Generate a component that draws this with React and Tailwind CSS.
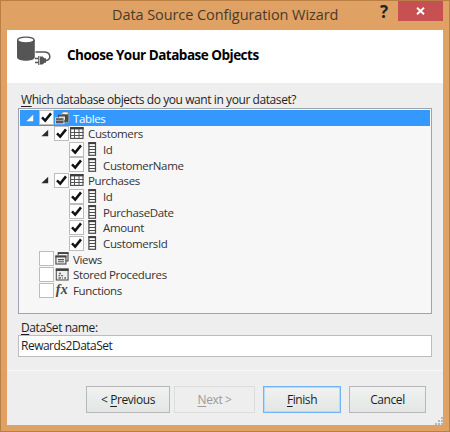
import React from "react";

const Arrow = ({ light }) => (
  <svg width="9" height="8" viewBox="0 0 9 8" className="shrink-0">
    <path d="M7.2 0.8V7.2H0.4Z" fill={light ? "#fff" : "#2b2b2b"} />
  </svg>
);

const Check = ({ checked }) => (
  <span className="flex h-[15px] w-[15px] shrink-0 items-center justify-center border border-[#bdbdbd] bg-white">
    {checked && (
      <svg width="11" height="11" viewBox="0 0 11 11">
        <path d="M1 5.4L4.2 8.6L10 1.4" fill="none" stroke="#111" strokeWidth="2.5" />
      </svg>
    )}
  </span>
);

const icons = {
  tables: (
    <svg width="15" height="14" viewBox="0 0 15 14">
      <path d="M6.5 2V10.5C7 12.3 13 12.3 13.8 10.5V2Z" fill="#4c4c4c" stroke="#d8d8d8" strokeWidth=".5" />
      <ellipse cx="10.2" cy="2.2" rx="3.6" ry="1.6" fill="#eee" stroke="#666" strokeWidth=".8" />
      <rect x="3.5" y="4.3" width="7" height="5" fill="#e8e8e8" stroke="#444" />
      <path d="M4 5H10" stroke="#444" />
      <rect x=".5" y="6.8" width="8.4" height="6" fill="#555" stroke="#e5e5e5" strokeWidth=".8" />
      <path d="M1 9.4H8.5" stroke="#bbb" strokeWidth=".8" />
    </svg>
  ),
  table: (
    <svg width="14" height="12" viewBox="0 0 14 12">
      <rect x=".6" y=".6" width="12.4" height="10.8" fill="#fff" stroke="#4a4a4a" strokeWidth="1.1" />
      <path d="M0 1.3H13.6" stroke="#3c3c3c" strokeWidth="2.2" />
      <path d="M0 5.5H13.6M0 8.5H13.6M4.5 2V12M9 2V12" stroke="#555" strokeWidth="1" />
    </svg>
  ),
  column: (
    <svg width="9" height="14" viewBox="0 0 9 14">
      <rect x=".9" y=".7" width="6.6" height="12.6" fill="#f8f8f8" stroke="#4a4a4a" strokeWidth="1.2" />
      <path d="M.4 1.2H8" stroke="#3c3c3c" strokeWidth="1.8" />
      <path d="M1 4.5H8M1 7.5H8M1 10.5H8" stroke="#4a4a4a" strokeWidth="1" />
    </svg>
  ),
  views: (
    <svg width="14" height="13" viewBox="0 0 14 13">
      <path d="M3.2 3V.8H13V8.8H11" fill="none" stroke="#555" strokeWidth="1.2" />
      <path d="M3 1.1H13.5" stroke="#444" strokeWidth="1.8" />
      <rect x=".9" y="4" width="10" height="8" fill="#eee" stroke="#555" strokeWidth="1.2" />
      <path d="M.4 4.6H11.4" stroke="#444" strokeWidth="1.8" />
      <path d="M3 7.6H9M3 9.7H9" stroke="#555" strokeWidth="1.1" />
    </svg>
  ),
  procs: (
    <svg width="14" height="13" viewBox="0 0 14 13">
      <rect x="1.3" y="1" width="11.8" height="11" fill="#eee" stroke="#555" strokeWidth="1.1" />
      <path d="M.8 1.8H13.6" stroke="#444" strokeWidth="2.4" />
      <path d="M4 5.5H6M3.5 7.7H5M6 7.7H8M3.5 10H6M7.2 10H8M9.2 10H11" stroke="#666" strokeWidth="1.3" />
    </svg>
  ),
  fx: (
    <span className="-mt-px font-['Liberation_Serif',serif] text-[14px] leading-[14px] font-bold tracking-[0.4px] text-[#484848] italic">
      fx
    </span>
  ),
};

const rows = [
  { label: "Tables", level: 0, arrow: true, checked: true, icon: "tables", selected: true },
  { label: "Customers", level: 1, arrow: true, checked: true, icon: "table" },
  { label: "Id", level: 2, checked: true, icon: "column" },
  { label: "CustomerName", level: 2, checked: true, icon: "column" },
  { label: "Purchases", level: 1, arrow: true, checked: true, icon: "table" },
  { label: "Id", level: 2, checked: true, icon: "column" },
  { label: "PurchaseDate", level: 2, checked: true, icon: "column" },
  { label: "Amount", level: 2, checked: true, icon: "column" },
  { label: "CustomersId", level: 2, checked: true, icon: "column" },
  { label: "Views", level: 0, icon: "views" },
  { label: "Stored Procedures", level: 0, icon: "procs" },
  { label: "Functions", level: 0, icon: "fx" },
];

const indent = ["pl-[6px]", "pl-[21px]", "pl-[36px]"];

const Row = ({ label, level, arrow, checked, icon, selected }) => (
  <div
    className={`flex h-[15.67px] items-center ${indent[level]} ${
      selected ? "bg-[#3399ff] text-white" : "text-[#333]"
    }`}
  >
    <span className="flex w-[13px] shrink-0 items-center">{arrow && <Arrow light={selected} />}</span>
    <Check checked={checked} />
    <span className="flex w-[19px] shrink-0 items-center justify-center pr-[3px]">{icons[icon]}</span>
    <span className="pt-px text-[11.5px] tracking-[-0.35px] whitespace-nowrap">{label}</span>
  </div>
);

const button = "flex h-[27px] items-center justify-center border whitespace-pre";
const face = "bg-linear-to-b from-[#f1f1f1] via-[#e8ede9] to-[#e4e5e4]";

export default function App() {
  return (
    <div className="flex h-[432px] w-[450px] flex-col border border-[#b98045] bg-[#dfa264] px-1.5 pb-1.5 font-['Open_Sans','Noto_Sans',sans-serif] text-[12px] leading-[15px] tracking-[-0.42px] text-[#1e1e1e]">
      <header className="flex h-[29px] shrink-0 items-start">
        <h1 className="w-[368px] shrink-0 pt-[4px] pl-[105px] text-[14.5px] leading-[20px] tracking-[-0.08px] whitespace-nowrap text-[#493a2c]">
          Data Source Configuration Wizard
        </h1>
        <span className="w-[23px] pt-px pl-[5px] text-[17px] leading-[20px] font-bold text-[#222]">?</span>
        <button className="flex h-5 w-[46px] items-center justify-center bg-[#c75050]">
          <svg width="9" height="8" viewBox="0 0 9 8">
            <path d="M1 .8L8 7.2M8 .8L1 7.2" stroke="#fff" strokeWidth="1.9" />
          </svg>
        </button>
      </header>

      <main className="flex min-h-0 flex-1 flex-col bg-[#eeeeee]">
        <section className="flex h-[53px] shrink-0 items-start bg-white">
          <svg width="36" height="32" viewBox="0 0 36 32" className="mt-[5px] ml-[9px]">
            <path d="M1 5V22.5C2 26.8 17.8 26.8 18.8 22.5V5Z" fill="#555" />
            <ellipse cx="9.9" cy="5" rx="8.2" ry="2.9" fill="#fff" stroke="#555" strokeWidth="1.4" />
            <path d="M19.5 17H28C35.5 17 35.5 25.5 29.5 25.5" fill="none" stroke="#555" strokeWidth="1.5" />
            <path d="M22.8 21V30" stroke="#555" strokeWidth="1.2" />
            <path d="M24 21.5H26.5L28.5 23.3H30V27.7H28.5L26.5 29.5H24Z" fill="#555" />
            <path d="M19 23.5H22.5M19 27.5H22.5" stroke="#555" strokeWidth="1.5" />
          </svg>
          <h2 className="mt-4 ml-[15px] text-[13.5px] leading-[18px] font-bold tracking-[-0.5px] whitespace-nowrap text-black">
            Choose Your Database Objects
          </h2>
        </section>

        <section className="flex flex-col px-[11px] pt-[9px]">
          <label className="pl-[3px] whitespace-nowrap">
            <u className="underline-offset-2">W</u>hich database objects do you want in your dataset?
          </label>
          <div className="mt-px h-[206px] border border-[#9ea3ad] bg-[#f7f7f7] px-px pt-px">
            {rows.map((row, i) => (
              <Row key={i} {...row} />
            ))}
          </div>
          <label className="mt-[6px] pl-[3px]">
            <u className="underline-offset-2">D</u>ataSet name:
          </label>
          <input
            className="h-[22px] border border-[#b8bdc1] bg-white px-[2px] pb-px tracking-[-0.5px] outline-none"
            defaultValue="Rewards2DataSet"
          />
        </section>

        <footer className="mt-[13px] flex flex-1 items-start border-t border-[#f8f8fc] pt-[15px] pl-[79px]">
          <button className={`${button} ${face} w-[84px] border-[#b5b7b8]`}>
            &lt; <u className="underline-offset-2">P</u>revious
          </button>
          <button className={`${button} ml-1 w-[81px] border-[#dcdcdc] text-[#9a9a9a]`}>
            <u className="underline-offset-2">N</u>ext &gt;
          </button>
          <button className={`${button} ${face} ml-2 w-[78px] border-[#70b4f5] shadow-[inset_0_0_0_1px_#b5dafb]`}>
            <u className="underline-offset-2">F</u>inish
          </button>
          <button className={`${button} ${face} ml-2 w-[77px] border-[#b5b7b8]`}>Cancel</button>
          <svg width="8" height="8" viewBox="0 0 8 8" className="ml-auto self-end" fill="#b5b5b5">
            <path d="M6 0h2v2H6zM3 3h2v2H3zM6 3h2v2H6zM0 6h2v2H0zM3 6h2v2H3zM6 6h2v2H6z" />
          </svg>
        </footer>
      </main>
    </div>
  );
}
